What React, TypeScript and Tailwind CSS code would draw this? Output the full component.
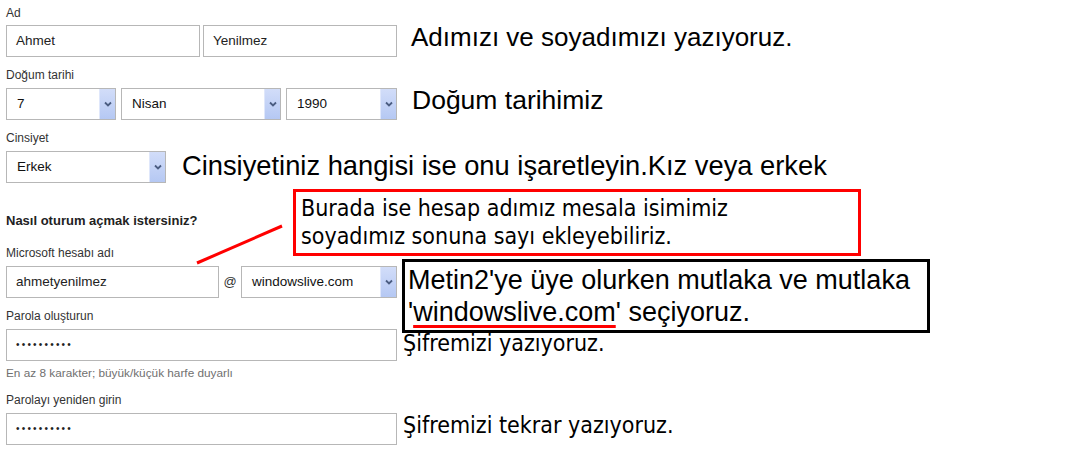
import React from "react";

const big = { fontFamily: '"Liberation Sans", Arial, sans-serif' };
const tahoma = { fontFamily: '"DejaVu Sans Condensed", "DejaVu Sans", sans-serif' };

function Label({ children, className = "" }: { children: React.ReactNode; className?: string }) {
  return <div className={`h-[15px] text-[12px] leading-[15px] text-[#333] ${className}`}>{children}</div>;
}

function TextBox({ value, className = "" }: { value: string; className?: string }) {
  return (
    <div className={`flex h-[32px] items-center border border-[#b7b7b7] bg-white pl-[9px] text-[13.5px] text-[#222] ${className}`}>
      {value}
    </div>
  );
}

function Dots({ className = "" }: { className?: string }) {
  return (
    <div className={`flex h-[32px] items-center border border-[#b7b7b7] bg-white pl-[9px] ${className}`}>
      <span className="text-[10px] leading-none tracking-[2.2px] text-[#222]">••••••••••</span>
    </div>
  );
}

function Select({ value, className = "" }: { value: string; className?: string }) {
  return (
    <div className={`flex h-[32px] items-center border border-[#b7b7b7] bg-white pl-[10px] text-[13.5px] text-[#111] ${className}`}>
      <span>{value}</span>
      <div className="ml-auto flex w-[16px] items-center justify-center self-stretch border-l border-[#dfe7fb] bg-linear-to-b from-[#d2ddf9] to-[#b5c8f3]">
        <svg width="8" height="6" viewBox="0 0 8 6">
          <polyline points="1,1.5 4,4.5 7,1.5" fill="none" stroke="#4b5d82" strokeWidth="1.8" />
        </svg>
      </div>
    </div>
  );
}

export default function App() {
  return (
    <div className="relative h-[462px] w-[1071px] overflow-hidden bg-white" style={big}>
      <div className="pl-[6px] pt-[6px]">
        {/* Ad */}
        <Label>Ad</Label>
        <div className="mt-[4px] flex items-start">
          <TextBox value="Ahmet" className="w-[194px]" />
          <TextBox value="Yenilmez" className="ml-[3px] w-[194px]" />
          <div className="-mt-[1px] ml-[14px] text-[26px] leading-[26px] text-black">Adımızı ve soyadımızı yazıyoruz.</div>
        </div>

        {/* Doğum tarihi */}
        <Label className="mt-[11px]">Doğum tarihi</Label>
        <div className="mt-[5px] flex items-start">
          <Select value="7" className="w-[110px]" />
          <Select value="Nisan" className="ml-[5px] w-[160px]" />
          <Select value="1990" className="ml-[5px] w-[111px]" />
          <div className="-mt-[1px] ml-[15px] text-[26.5px] leading-[26px] text-black">Doğum tarihimiz</div>
        </div>

        {/* Cinsiyet */}
        <Label className="mt-[11px]">Cinsiyet</Label>
        <div className="mt-[5px] flex items-start">
          <Select value="Erkek" className="w-[160px]" />
          <div className="ml-[16px] mt-[2px] text-[27.3px] leading-[26px] text-black">Cinsiyetiniz hangisi ise onu işaretleyin.Kız veya erkek</div>
        </div>

        {/* Oturum */}
        <div className="mt-[30px] h-[15px] text-[13px] font-bold leading-[15px] text-[#222]">Nasıl oturum açmak istersiniz?</div>
        <Label className="mt-[18px]">Microsoft hesabı adı</Label>
        <div className="mt-[5px] flex items-center">
          <TextBox value="ahmetyenilmez" className="w-[213px]" />
          <span className="w-[22px] text-center text-[13px] text-[#333]">@</span>
          <Select value="windowslive.com" className="w-[156px] pl-[9px]" />
        </div>

        <Label className="mt-[11px]">Parola oluşturun</Label>
        <div className="mt-[5px] flex items-start">
          <Dots className="w-[391px]" />
          <div className="ml-[6px] text-[23px] leading-[28px] text-black" style={tahoma}>Şifremizi yazıyoruz.</div>
        </div>
        <div className="mt-[5px] h-[15px] text-[11.8px] leading-[15px] text-[#707070]">En az 8 karakter; büyük/küçük harfe duyarlı</div>

        <Label className="mt-[12px]">Parolayı yeniden girin</Label>
        <div className="mt-[5px] flex items-start">
          <Dots className="w-[391px]" />
          <div className="-mt-[2px] ml-[6px] text-[23px] leading-[28px] text-black" style={tahoma}>Şifremizi tekrar yazıyoruz.</div>
        </div>
      </div>

      {/* callout: red box */}
      <div
        className="absolute left-[293px] top-[189px] h-[67px] w-[568px] border-[3px] border-[#ff0000] bg-white pl-[5px] pt-[2px] text-[23px] leading-[28px] text-black"
        style={tahoma}
      >
        <div>Burada ise hesap adımız mesala isimimiz</div>
        <div>soyadımız sonuna sayı ekleyebiliriz.</div>
      </div>

      {/* callout: black box */}
      <div className="absolute left-[402px] top-[259px] h-[74px] w-[528px] border-[3px] border-black bg-white pl-[3px] pt-[2px] text-[27px] leading-[32px] text-black">
        <div>Metin2'ye üye olurken mutlaka ve mutlaka</div>
        <div>
          '<span className="underline decoration-[#ff0000] decoration-[3px] underline-offset-[4px]">windowslive.com</span>' seçiyoruz.
        </div>
      </div>

      {/* pointer line */}
      <svg className="pointer-events-none absolute left-0 top-0" width="1071" height="462">
        <line x1="197" y1="263" x2="282" y2="226" stroke="#ff0000" strokeWidth="3" />
      </svg>
    </div>
  );
}
